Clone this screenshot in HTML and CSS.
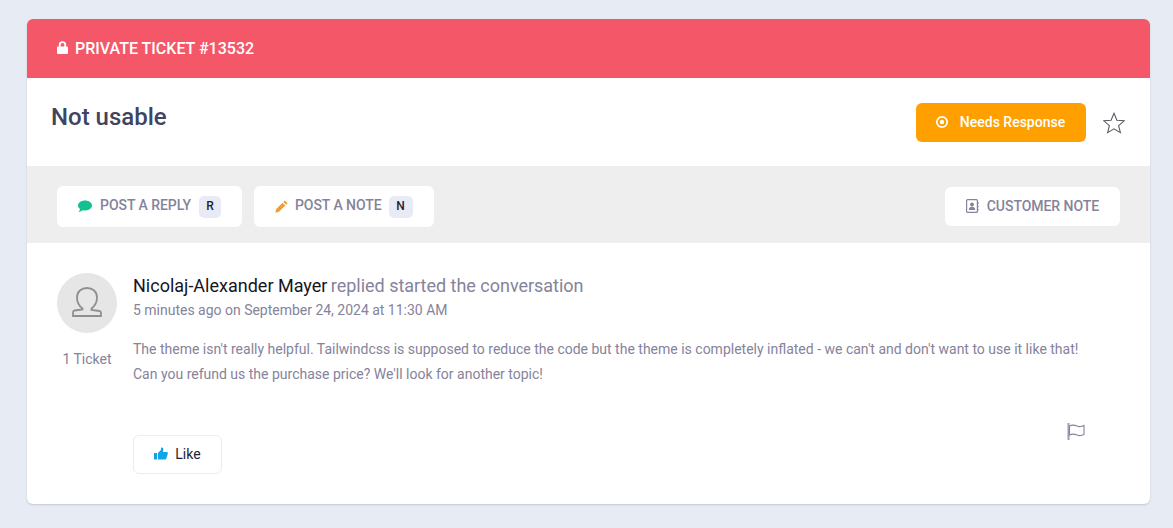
FILE: index.html
```html
<!DOCTYPE html>
<html lang="en">
<head>
<meta charset="utf-8">
<title>Private Ticket #13532</title>
<link rel="stylesheet" href="styles.css">
</head>
<body>
<main class="card">
  <header class="banner">
    <svg class="lock" viewBox="0 0 12 14" width="11" height="13" preserveAspectRatio="none"><path d="M2 6V4.200a4 4 0 0 1 8 0V6h.6c.8 0 1.400.6 1.400 1.300v5.300c0 .8-.6 1.400-1.400 1.400H1.400C.6 14 0 13.400 0 12.600V7.300C0 6.600.6 6 1.400 6zm2 0h4V4.200a2 2 0 0 0-4 0z" fill="#fff"/></svg>
    <span>PRIVATE TICKET #13532</span>
  </header>
  <section class="title-row">
    <h1>Not usable</h1>
    <div class="title-actions">
      <button class="status">
        <svg viewBox="0 0 14 14" width="14" height="14"><circle cx="7" cy="7" r="5.200" fill="none" stroke="#fff" stroke-width="1.700"/><circle cx="7" cy="7" r="2.200" fill="#fff"/></svg>
        Needs Response
      </button>
      <svg class="star" viewBox="0 0 22 22" width="22" height="22"><path d="M11 1.300l2.900 6.900 7.300.6-5.600 4.800 1.800 7.100L11 16.900l-6.400 3.800 1.800-7.100L.8 8.800l7.300-.6z" fill="none" stroke="#5b5b66" stroke-width="1.100" stroke-linejoin="miter"/></svg>
    </div>
  </section>
  <nav class="toolbar">
    <div class="toolbar-left">
      <button class="tool">
        <svg class="chat" viewBox="0 0 14 12" width="14" height="12"><path d="M7 .5c3.800 0 7 2.200 7 5s-3.200 5-7 5c-.8 0-1.500-.1-2.200-.3C3.700 11.100 2.300 11.700.6 11.800c.7-.7 1.300-1.700 1.500-2.700C.8 8.200 0 6.900 0 5.500c0-2.800 3.200-5 7-5z" fill="#14c08f"/></svg>
        <span>POST A REPLY</span><kbd class="r-key">R</kbd>
      </button>
      <button class="tool">
        <svg class="pencil" viewBox="0 0 13 13" width="13" height="13"><path d="M9.800.4l2.800 2.800-1.500 1.500-2.800-2.800zM7.500 2.700l2.800 2.800-6.300 6.300-3.600.9.800-3.700z" fill="#f59e2f"/></svg>
        <span>POST A NOTE</span><kbd class="n-key">N</kbd>
      </button>
    </div>
    <button class="tool customer">
      <svg viewBox="0 0 13 14" width="13" height="14"><rect x=".6" y=".6" width="10.800" height="12.800" rx="1" fill="none" stroke="#85839b" stroke-width="1.200"/><circle cx="6" cy="5.500" r="1.900" fill="#85839b"/><path d="M2.800 11c0-2.200 1.400-3.200 3.200-3.200s3.200 1 3.200 3.200z" fill="#85839b"/><path d="M12 3v2M12 6.500v2M12 10v1.500" stroke="#85839b" stroke-width="1.100"/></svg>
      <span>CUSTOMER NOTE</span>
    </button>
  </nav>
  <article class="message">
    <aside class="author">
      <div class="avatar">
        <svg viewBox="0 0 30 30" width="30" height="30"><path d="M10.500 21.500C6.500 18.500 5 14.500 5 10.500 5 4.500 9.500 1 15 1s10 3.500 10 9.500c0 4-1.500 8-5.500 11v1.500l8 1c1 .2 1.500.8 1.500 2V29H1v-3.500c0-1.200.5-1.800 1.500-2l8-1z" fill="none" stroke="#8f8f8f" stroke-width="1.800"/></svg>
      </div>
      <p class="tickets">1 Ticket</p>
    </aside>
    <div class="body">
      <h2><span class="name">Nicolaj-Alexander Mayer</span> <span class="action">replied started the conversation</span></h2>
      <p class="meta">5 minutes ago on September 24, 2024 at 11:30 AM</p>
      <div class="text">
        <p>The theme isn't really helpful. Tailwindcss is supposed to reduce the code but the theme is completely inflated - we can't and don't want to use it like that!</p>
        <p>Can you refund us the purchase price? We'll look for another topic!</p>
      </div>
      <div class="foot">
        <button class="like">
          <svg viewBox="0 0 14 13" width="14" height="13"><path d="M0 6h3v6.500H0z" fill="#0ea5e9"/><path d="M4 6l3-3.200V.5c1.600-.3 2.600.8 2.300 2.300L9 5h3.500c1 0 1.600.9 1.300 1.800l-1.500 4.800c-.2.600-.8 1-1.400 1H4z" fill="#0ea5e9"/></svg>
          Like
        </button>
        <svg class="flag" viewBox="0 0 18 17" width="18" height="17"><path d="M1.500 0v17" stroke="#9f9db0" stroke-width="2"/><path d="M2.500 3c3-1.500 5-1 7.500 0s4.500.8 7-.5v9c-2.500 1.300-4.500 1.500-7 .5s-4.500-1.500-7.500 0z" fill="none" stroke="#85839b" stroke-width="1.100"/></svg>
      </div>
    </div>
  </article>
</main>
</body>
</html>
```
FILE: styles.css
```css
* { box-sizing: border-box; }
html, body { margin: 0; }
body {
  height: 528px;
  overflow: hidden;
  padding: 19px 23px 0 27px;
  background: #e7ebf4;
  font-family: Roboto, "Liberation Sans", sans-serif;
}
button { font-family: inherit; cursor: pointer; }
.card {
  height: 485px;
  background: #fff;
  border-radius: 6px;
  box-shadow: 0 1px 2px rgba(90, 90, 120, .25);
  overflow: hidden;
}
.banner {
  height: 59px;
  display: flex;
  align-items: center;
  gap: 7px;
  padding-left: 30px;
  background: #f45768;
  color: #fff;
  font-size: 16px;
  font-weight: 500;
}
.lock { margin-bottom: 2px; }
.title-row {
  height: 88px;
  display: flex;
  justify-content: space-between;
  align-items: flex-start;
  padding: 25px 25px 0 24px;
}
h1 { margin: 0; font-size: 24px; line-height: 28px; font-weight: 500; color: #3f4461; }
.title-actions { display: flex; align-items: center; gap: 17px; }
.status {
  width: 170px;
  height: 39px;
  display: flex;
  align-items: center;
  justify-content: center;
  gap: 11px;
  padding: 0 2px 1px 0;
  border: 0;
  border-radius: 6px;
  background: #ffa000;
  color: #fff;
  font-size: 14px;
  font-weight: 500;
}
.toolbar {
  height: 77px;
  display: flex;
  justify-content: space-between;
  align-items: center;
  padding: 4px 30px 0;
  background: #eeeeee;
}
.toolbar-left { display: flex; gap: 12px; }
.tool {
  height: 41px;
  display: flex;
  align-items: center;
  padding: 0 21px 4px;
  border: 0;
  border-radius: 6px;
  background: #fff;
  color: #85839b;
  font-size: 14px;
  font-weight: 500;
}
.tool span { letter-spacing: -.05px; }
.tool svg { margin-right: 8px; }
.tool .chat { margin-top: 3px; }
.tool .pencil { margin: 3px 7px 0 0; }
kbd {
  height: 22px;
  display: flex;
  align-items: center;
  justify-content: center;
  margin: 4px 0 0 8px;
  padding-bottom: 1px;
  border-radius: 5px;
  background: #e8ebf5;
  color: #1f2333;
  font-family: inherit;
  font-size: 12px;
  font-weight: 500;
}
.r-key { width: 22px; }
.n-key { width: 24px; margin-left: 7px; }
.customer { height: 39px; padding: 0 21px 2px; }
.message { display: flex; padding: 30px 30px 0; }
.author { width: 76px; flex: none; }
.avatar {
  width: 60px;
  height: 60px;
  display: flex;
  align-items: center;
  justify-content: center;
  padding-bottom: 3px;
  border-radius: 50%;
  background: #e6e6e6;
}
.tickets { margin: 17px 0 0; width: 60px; font-size: 14px; line-height: 18px; text-align: center; color: #85839b; white-space: nowrap; }
.body { flex: 1; }
h2 { margin: 0; font-size: 18px; line-height: 26px; font-weight: 400; }
.name { color: #15161c; }
.action { margin-left: -1px; color: #85839b; letter-spacing: -.02px; }
.meta { margin: 1px 0 0; font-size: 14px; line-height: 20px; letter-spacing: -.01px; color: #85839b; }
.text { margin-top: 17px; font-size: 14px; line-height: 25px; color: #85839b; }
.text p { margin: 0; }
.foot { display: flex; justify-content: space-between; align-items: flex-start; margin-top: 48px; padding-right: 35px; }
.like {
  width: 89px;
  height: 39px;
  display: flex;
  align-items: center;
  justify-content: center;
  gap: 7px;
  padding: 0 0 2px;
  border: 1px solid #ececf2;
  border-radius: 6px;
  background: #fff;
  color: #1f2333;
  font-size: 14px;
  font-weight: 400;
}
.flag { margin-top: -12px; }
```
